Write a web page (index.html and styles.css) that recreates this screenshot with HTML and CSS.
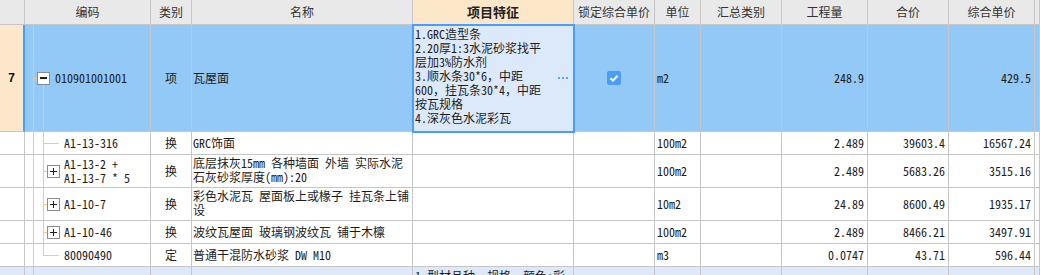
FILE: index.html
```html
<!DOCTYPE html>
<html lang="zh-CN">
<head>
<meta charset="utf-8">
<title>清单</title>
<link rel="stylesheet" href="styles.css">
</head>
<body>
<div class="sheet">
  <div class="row head">
    <div class="c"></div>
    <div class="c">编码</div>
    <div class="c">类别</div>
    <div class="c">名称</div>
    <div class="c feat-h">项目特征</div>
    <div class="c">锁定综合单价</div>
    <div class="c">单位</div>
    <div class="c">汇总类别</div>
    <div class="c">工程量</div>
    <div class="c">合价</div>
    <div class="c">综合单价</div>
    <div class="c"></div>
  </div>

  <div class="row sel h107">
    <div class="c num">7</div>
    <div class="c code root"><span class="box minus"></span><span>010901001001</span></div>
    <div class="c mid">项</div>
    <div class="c name">瓦屋面</div>
    <div class="c feat">
      <div class="ft">1.GRC造型条<br>2.20厚1:3水泥砂浆找平<br>层加3%防水剂<br>3.顺水条30*6，中距<br>600，挂瓦条30*4，中距<br>按瓦规格<br>4.深灰色水泥彩瓦</div>
      <svg class="more" width="10" height="2" viewBox="0 0 10 2"><rect x="0" y="0" width="2" height="2" fill="#5aa5f5"/><rect x="4" y="0" width="2" height="2" fill="#5aa5f5"/><rect x="8" y="0" width="2" height="2" fill="#5aa5f5"/></svg>
    </div>
    <div class="c mid"><svg width="14" height="14" viewBox="0 0 14 14"><rect width="14" height="14" rx="2" fill="#4b9ef8"/><path d="M3.4 7.3 L5.9 9.7 L10.6 4.7" fill="none" stroke="#fff" stroke-width="2"/></svg></div>
    <div class="c unit">m2</div>
    <div class="c"></div>
    <div class="c val">248.9</div>
    <div class="c val"></div>
    <div class="c val">429.5</div>
    <div class="c"></div>
  </div>

  <div class="row h23">
    <div class="c num"></div>
    <div class="c code child leaf"><span>A1-13-316</span></div>
    <div class="c mid">换</div>
    <div class="c name">GRC饰面</div>
    <div class="c"></div>
    <div class="c"></div>
    <div class="c unit">100m2</div>
    <div class="c"></div>
    <div class="c val">2.489</div>
    <div class="c val">39603.4</div>
    <div class="c val">16567.24</div>
    <div class="c"></div>
  </div>

  <div class="row h33">
    <div class="c num"></div>
    <div class="c code child"><span class="box plus"></span><span class="ml">A1-13-2 +<br>A1-13-7 * 5</span></div>
    <div class="c mid">换</div>
    <div class="c name top">底层抹灰15mm 各种墙面 外墙  实际水泥<br>石灰砂浆厚度(mm):20</div>
    <div class="c"></div>
    <div class="c"></div>
    <div class="c unit">100m2</div>
    <div class="c"></div>
    <div class="c val">2.489</div>
    <div class="c val">5683.26</div>
    <div class="c val">3515.16</div>
    <div class="c"></div>
  </div>

  <div class="row h33">
    <div class="c num"></div>
    <div class="c code child"><span class="box plus"></span><span>A1-10-7</span></div>
    <div class="c mid">换</div>
    <div class="c name top">彩色水泥瓦 屋面板上或椽子 挂瓦条上铺<br>设</div>
    <div class="c"></div>
    <div class="c"></div>
    <div class="c unit">10m2</div>
    <div class="c"></div>
    <div class="c val">24.89</div>
    <div class="c val">8600.49</div>
    <div class="c val">1935.17</div>
    <div class="c"></div>
  </div>

  <div class="row h23">
    <div class="c num"></div>
    <div class="c code child"><span class="box plus"></span><span>A1-10-46</span></div>
    <div class="c mid">换</div>
    <div class="c name">波纹瓦屋面 玻璃钢波纹瓦 铺于木檩</div>
    <div class="c"></div>
    <div class="c"></div>
    <div class="c unit">100m2</div>
    <div class="c"></div>
    <div class="c val">2.489</div>
    <div class="c val">8466.21</div>
    <div class="c val">3497.91</div>
    <div class="c"></div>
  </div>

  <div class="row h23">
    <div class="c num"></div>
    <div class="c code last leaf"><span>80090490</span></div>
    <div class="c mid">定</div>
    <div class="c name">普通干混防水砂浆 DW M10</div>
    <div class="c"></div>
    <div class="c"></div>
    <div class="c unit">m3</div>
    <div class="c"></div>
    <div class="c val">0.0747</div>
    <div class="c val">43.71</div>
    <div class="c val">596.44</div>
    <div class="c"></div>
  </div>

  <div class="row next">
    <div class="c num"></div>
    <div class="c code trunk"></div>
    <div class="c"></div>
    <div class="c"></div>
    <div class="c feat2"><div class="ft">1.型材品种、规格、颜色:彩<br>色压型钢板</div></div>
    <div class="c"></div>
    <div class="c"></div>
    <div class="c"></div>
    <div class="c"></div>
    <div class="c"></div>
    <div class="c"></div>
    <div class="c"></div>
  </div>
</div>
</body>
</html>
```

FILE: styles.css
```css
html, body {
  margin: 0;
  padding: 0;
}

body {
  width: 1040px;
  height: 275px;
  overflow: hidden;
  background: #ffffff;
  font-family: "Noto Sans Mono CJK SC", "Noto Sans CJK SC", monospace;
  font-size: 12px;
  color: #1c1c1c;
}

.sheet {
  display: flex;
  flex-direction: column;
}

.row {
  display: grid;
  grid-template-columns: 25px 126px 41px 221px 161px 81px 46px 81px 86px 81px 86px 1fr;
}

.c {
  box-sizing: border-box;
  border-right: 1px solid #c6c6c6;
  border-bottom: 1px solid #c6c6c6;
  display: flex;
  align-items: center;
  white-space: nowrap;
  overflow: hidden;
  line-height: 14px;
}

.head {
  height: 25px;
  background: #e9e9e9;
}

.head .c {
  justify-content: center;
  font-family: "Noto Sans CJK SC", sans-serif;
  font-size: 12px;
  color: #333333;
}

.head .feat-h {
  background: #fde7c9;
  font-weight: bold;
  font-size: 13px;
  color: #222222;
}

.h107 { height: 107px; }
.h23 { height: 23px; }
.h33 { height: 33px; }
.next { height: 40px; background: #dde9fb; }

.sel {
  background: #93c9f6;
}

.sel .num {
  background: #fde7cb;
  border-right: 2px solid #4b9ef8;
  justify-content: center;
  font-family: "Liberation Sans", sans-serif;
  font-weight: bold;
  font-size: 12px;
  color: #111111;
}

.mid {
  justify-content: center;
}

.name {
  padding-left: 1px;
}

.name.top {
  align-items: flex-start;
  padding-top: 1px;
}

.unit {
  padding-left: 2px;
}

.val {
  justify-content: flex-end;
  padding-right: 3px;
}

/* tree column */
.code {
  background-repeat: no-repeat;
}

.code.root {
  padding-left: 12px;
  background-image:
    linear-gradient(#fbc77c, #fbc77c),
    linear-gradient(#fbc77c, #fbc77c),
    linear-gradient(#fbc77c, #fbc77c);
  background-size: 1px 100%, 5px 1px, 1px 50%;
  background-position: 8px 0, 8px 50%, 18px 100%;
}

.code.root .box {
  margin-right: 5px;
}

.code.child {
  padding-left: 22px;
  background-image:
    linear-gradient(#fbc77c, #fbc77c),
    linear-gradient(#fbc77c, #fbc77c),
    linear-gradient(#fbc77c, #fbc77c);
  background-size: 1px 100%, 1px 100%, 16px 1px;
  background-position: 8px 0, 18px 0, 18px 50%;
}

.code.last {
  background-image:
    linear-gradient(#fbc77c, #fbc77c),
    linear-gradient(#fbc77c, #fbc77c),
    linear-gradient(#fbc77c, #fbc77c);
  background-size: 1px 100%, 1px 50%, 16px 1px;
  background-position: 8px 0, 18px 0, 18px 50%;
}

.code.trunk {
  background-image: linear-gradient(#fbc77c, #fbc77c);
  background-size: 1px 100%;
  background-position: 8px 0;
}

.code.leaf {
  padding-left: 39px;
}

.code.child .box {
  margin-right: 4px;
}

.box {
  box-sizing: border-box;
  width: 13px;
  height: 13px;
  border: 1px solid #8c8c8c;
  background: #ffffff;
  flex: none;
  display: flex;
  align-items: center;
  justify-content: center;
  position: relative;
}

.box::before {
  content: "";
  display: block;
  width: 7px;
  height: 1px;
  background: #1f1f1f;
}

.box.minus::before {
  height: 2px;
}

.box.plus::after {
  content: "";
  position: absolute;
  left: 5px;
  top: 2px;
  width: 1px;
  height: 7px;
  background: #1f1f1f;
}

.ml {
  line-height: 14px;
}

/* feature cell */
.feat {
  position: relative;
  z-index: 1;
  background: #dce9fb;
  outline: 2px solid #4b9ef8;
  outline-offset: -1px;
  align-items: flex-start;
}

.feat .ft,
.feat2 .ft {
  padding: 2px 0 0 2px;
  line-height: 14px;
  flex: 1;
}

.feat2 {
  align-items: flex-start;
}

.feat .more {
  align-self: center;
  margin-right: 5px;
  flex: none;
}
```
